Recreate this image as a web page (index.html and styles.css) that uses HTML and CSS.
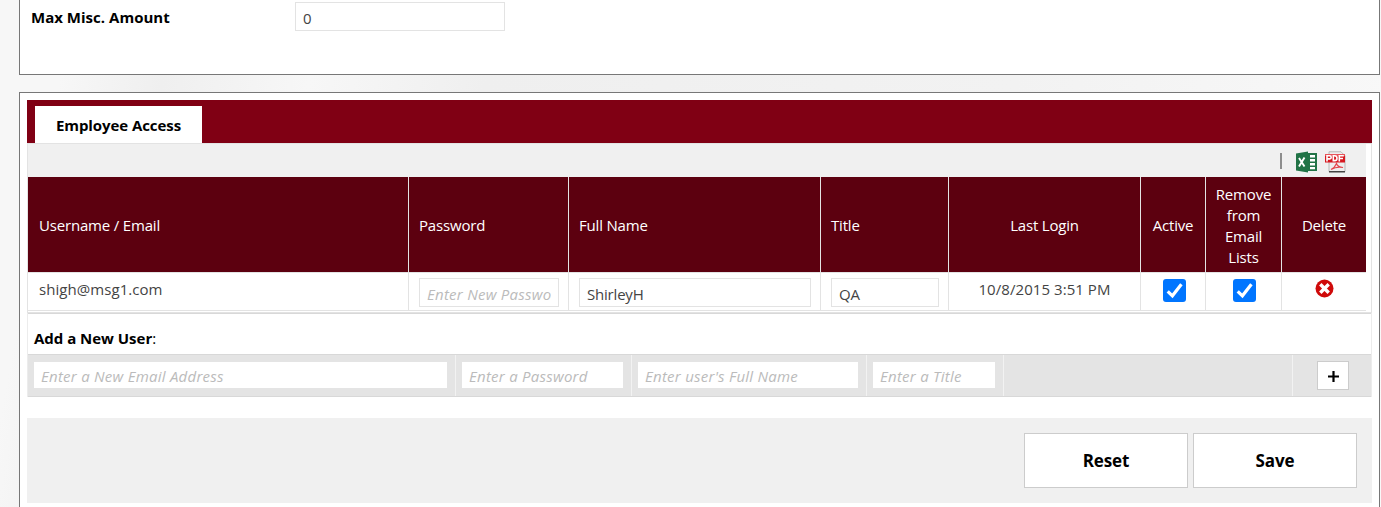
FILE: index.html
```html
<!DOCTYPE html>
<html lang="en">
<head>
<meta charset="utf-8">
<title>Employee Access</title>
<link rel="stylesheet" href="styles.css">
</head>
<body>
<section class="panel settings">
  <label class="settings-label" for="misc"><span class="t-misc">Max Misc. Amount</span></label>
  <input class="field misc" id="misc" value="0">
</section>
<section class="panel access">
  <div class="tabs"><div class="tab"><span class="t-tab">Employee Access</span></div></div>
  <div class="grid-box">
    <div class="toolbar">
      <span class="pipe"></span>
      <svg class="excel" width="22" height="22" viewBox="0 0 22 22">
        <path fill="#fff" d="M12 2h9v18h-9z"/>
        <path fill="#217346" d="M0 2.500 12 .5v21L0 19.500z"/>
        <path fill="#217346" d="M12 2h9v18h-9z"/>
        <path fill="#fff" d="M14 4h5v2.500h-5zM14 8h5v2.500h-5zM14 12h5v2.500h-5zM14 16h5v2.200h-5z"/>
        <path stroke="#fff" stroke-width="1.900" d="m3 7 5.500 8.500M8.500 6.500 3 15.500"/>
      </svg>
      <svg class="pdf" width="22" height="22" viewBox="0 0 22 22">
        <path fill="#eee" stroke="#aaa" stroke-width=".8" d="M4 .8h12l4 4V20.500H4z"/>
        <path fill="#444" d="M4 20h16v1.500H4z"/>
        <path fill="#d71920" d="M0 3h20v8.500H0z"/>
        <path fill="#e8545a" d="M0 3h20v2H0z"/>
        <path fill="none" stroke="#fff" stroke-width="1.600" d="M2 10.500V4.800h2.800q1.400 0 1.400 1.500T4.800 7.900H2M8.300 4.800v4.800h1.400q2.300 0 2.300-2.400t-2.300-2.400zM14.300 10.500V4.800h4.500M14.300 7.500h3.700"/>
        <path fill="none" stroke="#e4474d" stroke-width="1.200" d="M6 18.500q4-2 5.500-6 1 3.500 6.500 4-6-1.500-12 2"/>
      </svg>
    </div>
    <div class="row head">
      <div class="cell"><span class="t-h">Username / Email</span></div>
      <div class="cell"><span class="t-h">Password</span></div>
      <div class="cell"><span class="t-h">Full Name</span></div>
      <div class="cell"><span class="t-h">Title</span></div>
      <div class="cell mid"><span class="t-h">Last Login</span></div>
      <div class="cell mid"><span class="t-h">Active</span></div>
      <div class="cell mid"><span class="t-h">Remove<br>from<br>Email<br>Lists</span></div>
      <div class="cell mid"><span class="t-h">Delete</span></div>
    </div>
    <div class="row body">
      <div class="cell"><span class="t-b">shigh@msg1.com</span></div>
      <div class="cell"><input class="field" placeholder="Enter New Password"></div>
      <div class="cell"><input class="field" value="ShirleyH"></div>
      <div class="cell"><input class="field" value="QA"></div>
      <div class="cell mid"><span class="t-d">10/8/2015 3:51 PM</span></div>
      <div class="cell mid"><svg class="check" width="23" height="23" viewBox="0 0 23 23"><rect width="23" height="23" rx="3" fill="#0075ff"/><path d="m4.700 12.300 4.700 4.500L18.400 5.200" fill="none" stroke="#fff" stroke-width="3.200"/></svg></div>
      <div class="cell mid"><svg class="check" width="23" height="23" viewBox="0 0 23 23"><rect width="23" height="23" rx="3" fill="#0075ff"/><path d="m4.700 12.300 4.700 4.500L18.400 5.200" fill="none" stroke="#fff" stroke-width="3.200"/></svg></div>
      <div class="cell mid"><svg class="remove" width="19" height="19" viewBox="0 0 19 19"><circle cx="9.500" cy="9.500" r="9" fill="#cf0a0a"/><path d="m5.300 5.300 8.400 8.400M13.700 5.300l-8.400 8.400" stroke="#fff" stroke-width="3.400"/></svg></div>
    </div>
  </div>
  <div class="add-box">
    <div class="add-title"><b class="t-add">Add a New User</b>:</div>
    <div class="add-row">
      <div class="add-cell"><input class="field" placeholder="Enter a New Email Address"></div>
      <div class="add-cell"><input class="field" placeholder="Enter a Password"></div>
      <div class="add-cell"><input class="field" placeholder="Enter user's Full Name"></div>
      <div class="add-cell"><input class="field" placeholder="Enter a Title"></div>
      <div class="add-cell"></div>
      <div class="add-cell plus-cell"><button class="plus" aria-label="Add user"><svg class="plus-icon" width="11" height="11" viewBox="0 0 11 11"><path d="M5.500 0v11M0 5.500h11" stroke="#000" stroke-width="2.200"/></svg></button></div>
    </div>
  </div>
  <div class="actions"><button class="btn">Reset</button><button class="btn">Save</button></div>
</section>
</body>
</html>
```
FILE: styles.css
```css
* { box-sizing: border-box; }
body {
  margin: 0;
  height: 507px;
  overflow: hidden;
  padding-left: 19px;
  font: 15px/21px "Open Sans", "Noto Sans", sans-serif;
  letter-spacing: 0;
  color: #444;
  background: linear-gradient(100deg, #f7f7f7 0, #f7f7f7 5%, #efefef 12%, #f7f7f7 22%, #efefef 34%, #f2f2f2 70%, #f9f9f9 100%);
}
.panel { width: 1361px; border: 1px solid #777; background: #fff; }
.settings { height: 75px; border-top: 0; padding: 2px 0 0 11px; display: flex; align-items: flex-start; }
.settings-label { width: 264px; padding-top: 5px; font-weight: 700; color: #000; }
.t-misc { letter-spacing: .02px; }
.t-tab { letter-spacing: -.07px; }
.t-add { letter-spacing: -.02px; }
.field {
  display: block;
  width: 100%;
  height: 29px;
  margin: 0;
  padding: 3px 7px 1px;
  border: 1px solid #e3e3e3;
  border-radius: 0;
  outline: 0;
  background: #fff;
  font: inherit;
  letter-spacing: -.2px;
  color: #444;
}
.field::placeholder { color: #bbb; font-style: italic; opacity: 1; letter-spacing: .25px; }
.misc { width: 210px; }
.access { margin-top: 17px; height: 430px; padding: 7px; }
.tabs { height: 43px; width: 1345px; background: #800014; padding: 6px 8px 0; }
.tab { width: 167px; height: 37px; background: #fff; color: #000; font-weight: 700; text-align: center; line-height: 38px; }
.grid-box { width: 1345px; border: 1px solid #e3e3e3; height: 170px; }
.toolbar { width: 1338px; height: 33px; background: #f0f0f0; display: flex; padding: 7px 0 0 1252px; }
.pipe { width: 2px; height: 16px; margin: 2px 14px 0 0; background: #8d8d8d; }
.excel { margin-right: 7px; flex: none; }
.pdf { flex: none; }
.row { width: 1338px; display: grid; grid-template-columns: 381px 160px 252px 128px 192px 65px 76px 84px; }
.head { height: 95px; background: #5c000f; color: #fff; letter-spacing: -.18px; }
.cell { border-right: 1px solid #e3e3e3; padding: 0 9px 0 10px; }
.cell:first-child { padding-left: 11px; }
.cell:last-child { border-right: 0; }
.head .cell { display: flex; align-items: center; padding-top: 2px; }
.mid, .head .mid { justify-content: center; text-align: center; padding-left: 0; padding-right: 0; }
.body { height: 39px; border: solid #e3e3e3; border-width: 1px 0; }
.body .cell { padding-top: 5px; }
.t-b, .t-d { display: block; line-height: 22px; letter-spacing: .06px; }
.check { display: block; margin: 1px auto 0 22px; }
.mid:nth-child(7) .check { margin-left: 27px; }
.remove { display: block; margin: 1px auto 0; }
.add-box { width: 1345px; height: 84px; border: solid #ececec; border-width: 0 1px; }
.add-title { height: 41px; padding: 14px 0 0 6px; border-top: 1px solid #d8d8d8; color: #000; }
.add-row { height: 43px; background: #e4e4e4; border: solid #d8d8d8; border-width: 1px 0; display: grid; grid-template-columns: 428px 176px 235px 137px 289px 78px; }
.add-cell { border-right: 1px solid #f2f2f2; padding: 7px 8px 0 6px; }
.add-cell:last-child { border-right: 0; }
.add-cell .field { height: 26px; border: 0; padding: 3px 7px 1px; }
.add-cell.plus-cell { padding: 6px 0 0 24px; }
.plus { display: block; width: 32px; height: 29px; padding: 0; border: 1px solid #ccc; background: #fff; }
.plus-icon { display: block; margin: 2px auto 0; }
.actions { width: 1345px; height: 85px; margin-top: 21px; background: #f0f0f0; display: flex; justify-content: flex-end; gap: 5px; padding: 15px 15px 0 0; }
.btn { width: 164px; height: 55px; padding: 0; border: 1px solid #ccc; background: #fff; color: #000; font: 700 17px/53px "Open Sans", sans-serif; letter-spacing: -.1px; }
```
